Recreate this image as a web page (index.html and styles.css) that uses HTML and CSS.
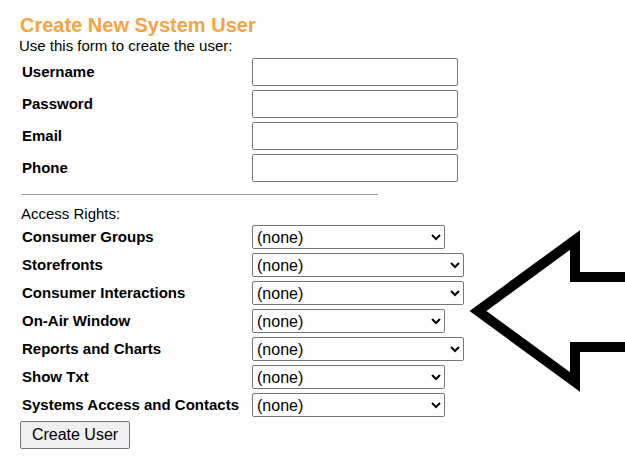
FILE: index.html
```html
<!DOCTYPE html>
<html lang="en">
<head>
    <meta charset="UTF-8">
    <title>Create New System User</title>
    <link rel="stylesheet" href="styles.css">
</head>
<body>
    <div class="page">
        <h1 class="title">Create New System User</h1>
        <p class="intro">Use this form to create the user:</p>

        <div class="fields">
            <label class="field-label">Username</label>
            <input class="text-input" type="text">
            <label class="field-label">Password</label>
            <input class="text-input" type="password">
            <label class="field-label">Email</label>
            <input class="text-input" type="text">
            <label class="field-label">Phone</label>
            <input class="text-input" type="text">
        </div>

        <hr class="divider">

        <p class="section-label">Access Rights:</p>

        <div class="rights">
            <label class="field-label">Consumer Groups</label>
            <select class="pick short"><option>(none)</option></select>
            <label class="field-label">Storefronts</label>
            <select class="pick long"><option>(none)</option></select>
            <label class="field-label">Consumer Interactions</label>
            <select class="pick long"><option>(none)</option></select>
            <label class="field-label">On-Air Window</label>
            <select class="pick short"><option>(none)</option></select>
            <label class="field-label">Reports and Charts</label>
            <select class="pick long"><option>(none)</option></select>
            <label class="field-label">Show Txt</label>
            <select class="pick short"><option>(none)</option></select>
            <label class="field-label">Systems Access and Contacts</label>
            <select class="pick short"><option>(none)</option></select>
        </div>

        <button class="submit" type="button">Create User</button>
    </div>

    <!-- arrow pointing at the access rights -->
    <svg class="arrow" viewBox="0 0 625 472" xmlns="http://www.w3.org/2000/svg">
        <path d="M 640 277 L 575 277 L 575 240 L 478 311 L 575 382 L 575 347 L 640 347"
              fill="none" stroke="#000" stroke-width="10" stroke-linejoin="miter" />
    </svg>
</body>
</html>
```

FILE: styles.css
```css
body {
    margin: 0;
    font-family: "Liberation Sans", Arial, sans-serif;
    color: #000;
    background: #fff;
}

.page {
    padding: 14px 0 0 19px;
}

.title {
    margin: 0;
    font-size: 20px;
    line-height: 23px;
    color: #f7a33f;
    padding-left: 1px;
}

.intro {
    margin: 0;
    font-size: 15px;
    line-height: 17px;
}

.fields {
    display: grid;
    grid-template-columns: 233px 206px;
    row-gap: 4px;
    align-items: center;
    margin-top: 4px;
}

.field-label {
    font-size: 15px;
    font-weight: bold;
    padding: 0 0 2px 3px;
}

.text-input {
    box-sizing: border-box;
    width: 206px;
    height: 28px;
    margin: 0;
    border: 1px solid #767676;
    border-radius: 2px;
}

.divider {
    width: 357px;
    margin: 12px 0 0 2px;
    border: 0;
    border-top: 1px solid #9a9a9a;
    height: 0;
}

.section-label {
    margin: 10px 0 0 2px;
    font-size: 15px;
    line-height: 17px;
}

.rights {
    display: grid;
    grid-template-columns: 233px auto;
    justify-items: start;
    row-gap: 4px;
    align-items: center;
    margin-top: 3px;
}

.pick {
    box-sizing: border-box;
    height: 24px;
    margin: 0;
    font-family: "Liberation Sans", Arial, sans-serif;
    font-size: 16px;
    border: 1px solid #767676;
    border-radius: 2px;
    background: #fff;
}

.pick.short {
    width: 193px;
}

.pick.long {
    width: 212px;
}

.submit {
    width: 110px;
    height: 28px;
    margin: 4px 0 0 1px;
    padding: 0;
    font-family: "Liberation Sans", Arial, sans-serif;
    font-size: 16px;
    background: #efefef;
    border: 1px solid #767676;
    border-radius: 2px;
}

.arrow {
    position: absolute;
    left: 0;
    top: 0;
    width: 625px;
    height: 472px;
    pointer-events: none;
}
```
